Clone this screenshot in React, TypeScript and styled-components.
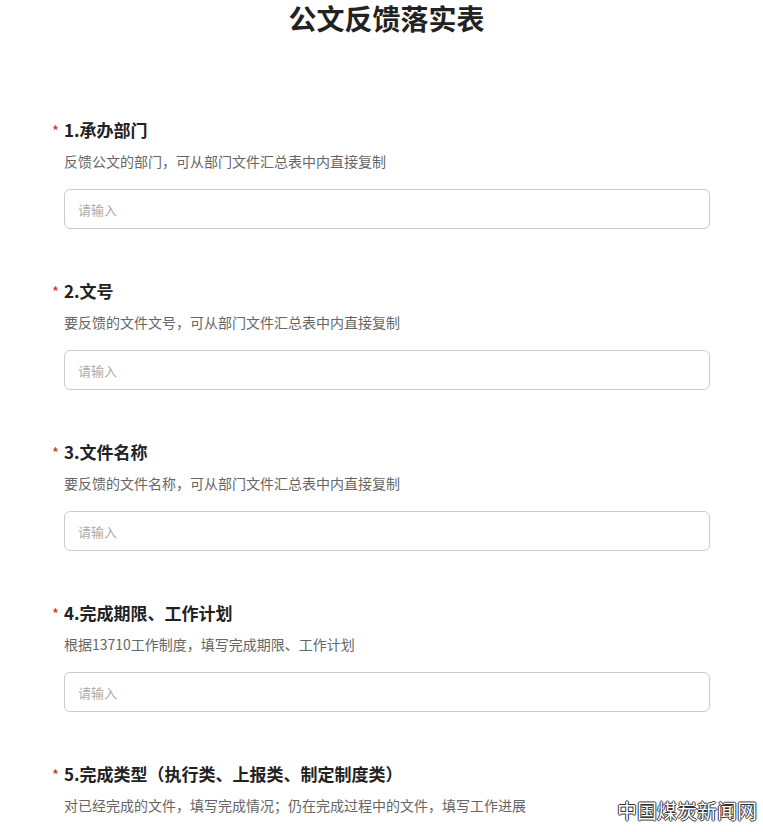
import React from 'react';
import styled, { createGlobalStyle } from 'styled-components';

const GlobalStyle = createGlobalStyle`
  body {
    margin: 0;
    background: #fff;
    font-family: "Noto Sans CJK SC", "Noto Sans", sans-serif;
  }
`;

const Page = styled.div`
  position: relative;
  width: 763px;
  height: 832px;
  overflow: hidden;
  background: #fff;
`;

const Title = styled.h1`
  margin: 0;
  padding: 2px 0 0 10px;
  text-align: center;
  font-size: 28px;
  line-height: 32px;
  font-weight: 700;
  color: #222;
`;

const Form = styled.div`
  padding: 83px 53px 0 52px;
  display: flex;
  flex-direction: column;
  gap: 49px;
`;

const Field = styled.div`
  display: flex;
  flex-direction: column;
`;

const Label = styled.div`
  display: flex;
  align-items: center;
  height: 24px;
  font-size: 17px;
  font-weight: 700;
  color: #222;
`;

const Star = styled.span`
  width: 12px;
  font-size: 15px;
  line-height: 1;
  font-weight: 400;
  color: #c8352b;
  padding-top: 3px;
`;

const Hint = styled.div`
  margin: 10px 0 0 12px;
  font-size: 14px;
  line-height: 20px;
  color: #666;
`;

const Input = styled.input`
  box-sizing: border-box;
  margin: 18px 0 0 12px;
  height: 40px;
  width: 646px;
  padding: 0 13px;
  border: 1px solid #ccc;
  border-radius: 6px;
  font-family: inherit;
  font-size: 13px;
  color: #333;
  outline: none;

  &::placeholder {
    color: #aaa;
  }
`;

const Watermark = styled.div`
  position: absolute;
  right: 6px;
  bottom: 9px;
  font-size: 20px;
  line-height: 24px;
  color: #fff;
  text-shadow: 1px 0 #333, -1px 0 #333, 0 1px #333, 0 -1px #333;
`;

const fields = [
  { label: '1.承办部门', hint: '反馈公文的部门，可从部门文件汇总表中内直接复制' },
  { label: '2.文号', hint: '要反馈的文件文号，可从部门文件汇总表中内直接复制' },
  { label: '3.文件名称', hint: '要反馈的文件名称，可从部门文件汇总表中内直接复制' },
  { label: '4.完成期限、工作计划', hint: '根据13710工作制度，填写完成期限、工作计划' },
  { label: '5.完成类型（执行类、上报类、制定制度类）', hint: '对已经完成的文件，填写完成情况；仍在完成过程中的文件，填写工作进展' },
];

export default function App() {
  return (
    <Page>
      <GlobalStyle />
      <Title>公文反馈落实表</Title>
      <Form>
        {fields.map((f, i) => (
          <Field key={i}>
            <Label>
              <Star>*</Star>
              {f.label}
            </Label>
            <Hint>{f.hint}</Hint>
            {i < 4 && <Input placeholder="请输入" />}
          </Field>
        ))}
      </Form>
      <Watermark>中国煤炭新闻网</Watermark>
    </Page>
  );
}
